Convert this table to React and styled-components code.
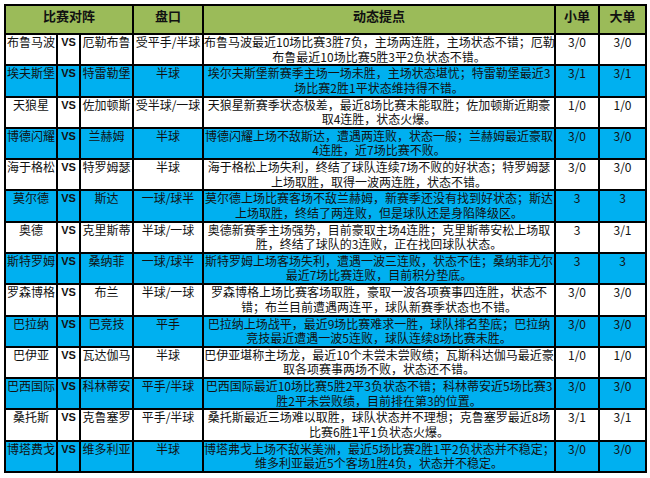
import React from "react";
import styled, { createGlobalStyle } from "styled-components";

const GlobalStyle = createGlobalStyle`
  html, body {
    margin: 0;
    padding: 0;
    background: #ffffff;
  }
  body {
    font-family: "Noto Sans CJK SC", "Noto Sans", sans-serif;
  }
`;

const matches = [
  {
    home: "布鲁马波", away: "厄勒布鲁", handicap: "受平手/半球",
    note: ["布鲁马波最近10场比赛3胜7负，主场两连胜，主场状态不错；厄勒", "布鲁最近10场比赛5胜3平2负状态不错。"],
    small: "3/0", big: "3/0",
  },
  {
    home: "埃夫斯堡", away: "特雷勒堡", handicap: "半球",
    note: ["埃尔夫斯堡新赛季主场一场未胜，主场状态堪忧；特雷勒堡最近3", "场比赛2胜1平状态维持得不错。"],
    small: "3/1", big: "3/1",
  },
  {
    home: "天狼星", away: "佐加顿斯", handicap: "受半球/一球",
    note: ["天狼星新赛季状态极差，最近8场比赛未能取胜；佐加顿斯近期豪", "取4连胜，状态火爆。"],
    small: "1/0", big: "1/0",
  },
  {
    home: "博德闪耀", away: "兰赫姆", handicap: "半球",
    note: ["博德闪耀上场不敌斯达，遭遇两连败，状态一般；兰赫姆最近豪取", "4连胜，近7场比赛不败。"],
    small: "3/0", big: "3/0",
  },
  {
    home: "海于格松", away: "特罗姆瑟", handicap: "半球",
    note: ["海于格松上场失利，终结了球队连续7场不败的好状态；特罗姆瑟", "上场取胜，取得一波两连胜，状态不错。"],
    small: "3/0", big: "3/0",
  },
  {
    home: "莫尔德", away: "斯达", handicap: "一球/球半",
    note: ["莫尔德上场比赛客场不敌兰赫姆，新赛季还没有找到好状态；斯达", "上场取胜，终结了两连败，但是球队还是身陷降级区。"],
    small: "3", big: "3",
  },
  {
    home: "奥德", away: "克里斯蒂", handicap: "半球/一球",
    note: ["奥德新赛季主场强势，目前豪取主场4连胜；克里斯蒂安松上场取", "胜，终结了球队的3连败，正在找回球队状态。"],
    small: "3", big: "3/1",
  },
  {
    home: "斯特罗姆", away: "桑纳菲", handicap: "一球/球半",
    note: ["斯特罗姆上场客场失利，遭遇一波三连败，状态不佳；桑纳菲尤尔", "最近7场比赛连败，目前积分垫底。"],
    small: "3", big: "3",
  },
  {
    home: "罗森博格", away: "布兰", handicap: "半球/一球",
    note: ["罗森博格上场比赛客场取胜，豪取一波各项赛事四连胜，状态不", "错；布兰目前遭遇两连平，球队新赛季状态也不错。"],
    small: "3/0", big: "3/0",
  },
  {
    home: "巴拉纳", away: "巴竞技", handicap: "平手",
    note: ["巴拉纳上场战平，最近9场比赛难求一胜，球队排名垫底；巴拉纳", "竞技最近遭遇一波5连败，球队连续8场比赛未胜。"],
    small: "3/0", big: "3/0",
  },
  {
    home: "巴伊亚", away: "瓦达伽马", handicap: "半球",
    note: ["巴伊亚堪称主场龙，最近10个未尝未尝败绩；瓦斯科达伽马最近豪", "取各项赛事两场不败，状态还不错。"],
    small: "1/0", big: "1/0",
  },
  {
    home: "巴西国际", away: "科林蒂安", handicap: "平手/半球",
    note: ["巴西国际最近10场比赛5胜2平3负状态不错；科林蒂安近5场比赛3", "胜2平未尝败绩，目前排在第3的位置。"],
    small: "3/0", big: "3/0",
  },
  {
    home: "桑托斯", away: "克鲁塞罗", handicap: "平手/半球",
    note: ["桑托斯最近三场难以取胜，球队状态并不理想；克鲁塞罗最近8场", "比赛6胜1平1负状态火爆。"],
    small: "3/1", big: "3/1",
  },
  {
    home: "博塔费戈", away: "维多利亚", handicap: "半球",
    note: ["博塔弗戈上场不敌米美洲，最近5场比赛2胜1平2负状态并不稳定；", "维多利亚最近5个客场1胜4负，状态并不稳定。"],
    small: "3/0", big: "3/0",
  },
];

function App() {
  return (
    <Sheet>
      <GlobalStyle />
      <Table>
        <HeaderRow>
          <HeadCell $span={3}>比赛对阵</HeadCell>
          <HeadCell>盘口</HeadCell>
          <HeadCell>动态提点</HeadCell>
          <HeadCell>小单</HeadCell>
          <HeadCell>大单</HeadCell>
        </HeaderRow>
        {matches.map((m, i) => {
          const blue = i % 2 === 1;
          return (
            <Row key={m.home}>
              <Cell $blue={blue}>{m.home}</Cell>
              <Cell $blue={blue} $narrow>VS</Cell>
              <Cell $blue={blue}>{m.away}</Cell>
              <Cell $blue={blue}>{m.handicap}</Cell>
              <Cell $blue={blue}>
                {m.note[0]}
                <br />
                {m.note[1]}
              </Cell>
              <Cell $blue={blue}>{m.small}</Cell>
              <Cell $blue={blue}>{m.big}</Cell>
            </Row>
          );
        })}
      </Table>
    </Sheet>
  );
}

const Sheet = styled.div`
  width: 650px;
  height: 478px;
  padding: 4px 0 0 4px;
  box-sizing: border-box;
  background: #ffffff;
  overflow: hidden;
`;

const Table = styled.div`
  width: 643px;
  height: 469px;
  box-sizing: border-box;
  padding: 2px;
  background: #000000;
  display: flex;
  flex-direction: column;
  gap: 2px;
`;

const columns = "50px 21px 51px 68px 350px 42px 45px";

const HeaderRow = styled.div`
  display: grid;
  grid-template-columns: ${columns};
  gap: 2px;
  height: 27px;
  flex: none;
`;

const HeadCell = styled.div`
  grid-column: span ${(props) => props.$span || 1};
  background: #9bbb59;
  color: #111111;
  font-size: 13px;
  font-weight: 700;
  line-height: 16px;
  padding-top: 2px;
  text-align: center;
`;

const Row = styled.div`
  display: grid;
  grid-template-columns: ${columns};
  gap: 2px;
  flex: 1 1 0;
  min-height: 0;
`;

const Cell = styled.div`
  background: ${(props) => (props.$blue ? "#00b0f0" : "#ffffff")};
  color: #111111;
  font-size: ${(props) => (props.$narrow ? "11px" : "12px")};
  font-weight: ${(props) => (props.$narrow ? 700 : 400)};
  font-family: ${(props) =>
    props.$narrow ? '"Liberation Sans", Arial, sans-serif' : "inherit"};
  line-height: 14.5px;
  padding-top: 0;
  min-height: 0;
  text-align: center;
  white-space: nowrap;
`;

export default App;
